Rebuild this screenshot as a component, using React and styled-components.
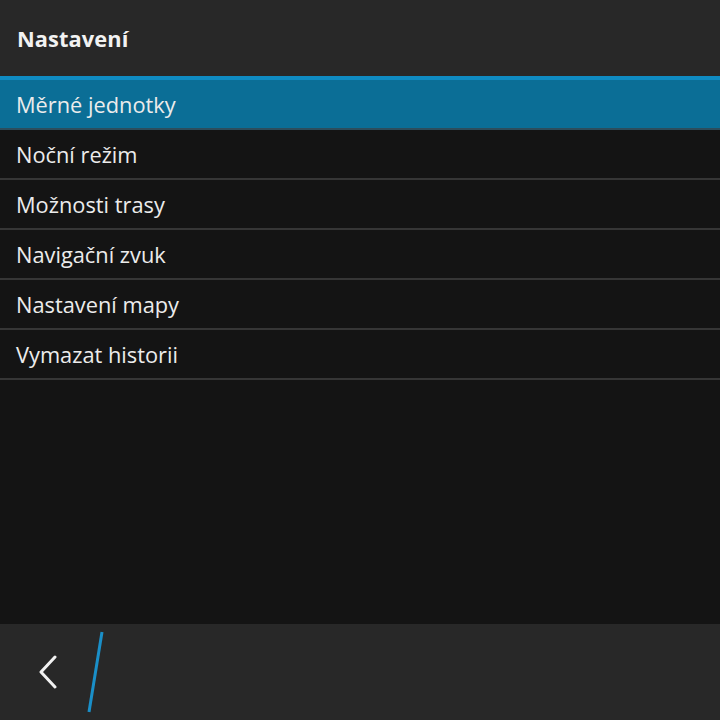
import React from 'react';
import styled, { createGlobalStyle } from 'styled-components';

const GlobalStyle = createGlobalStyle`
    html, body {
        margin: 0;
        padding: 0;
        background: #141414;
    }
    body {
        font-family: "Open Sans", "Noto Sans", sans-serif;
    }
`;

const StyledScreen = styled.div`
    width: 720px;
    height: 720px;
    display: flex;
    flex-direction: column;
    background: #141414;
    overflow: hidden;
`;

const StyledHeader = styled.header`
    height: 76px;
    flex: none;
    display: flex;
    align-items: center;
    padding: 0 16px 0 17px;
    box-sizing: border-box;
    background: #282828;
    color: #f2f2f2;
    font-size: 21.8px;
    font-weight: 700;
    letter-spacing: 0.1px;
`;

const StyledList = styled.ul`
    list-style: none;
    margin: 0;
    padding: 0;
    flex: 1;
`;

const StyledItem = styled.li`
    height: 48px;
    display: flex;
    align-items: center;
    padding: 0 16px;
    font-size: 21.8px;
    color: #ececec;
    background: ${(props) => (props.selected ? '#0b6e96' : 'transparent')};
    border-top: ${(props) => (props.selected ? '4px solid #0f8bc2' : 'none')};
    border-bottom: 2px solid ${(props) => (props.selected ? '#2c4d5c' : '#363636')};
`;

const StyledActionBar = styled.footer`
    height: 96px;
    flex: none;
    display: flex;
    align-items: center;
    background: #282828;
`;

const StyledBack = styled.button`
    width: 96px;
    height: 96px;
    border: none;
    background: none;
    padding: 0;
    display: flex;
    align-items: center;
    justify-content: center;
    cursor: pointer;
`;

const StyledDivider = styled.svg`
    display: block;
    margin-left: -9px;
`;

const items = ['Měrné jednotky', 'Noční režim', 'Možnosti trasy', 'Navigační zvuk', 'Nastavení mapy', 'Vymazat historii'];

const App = () => (
    <StyledScreen>
        <GlobalStyle />
        <StyledHeader>Nastavení</StyledHeader>
        <StyledList>
            {items.map((item, i) => (
                <StyledItem key={item} selected={i === 0}>
                    {item}
                </StyledItem>
            ))}
        </StyledList>
        <StyledActionBar>
            <StyledBack aria-label="Zpět">
                <svg width="20" height="34" viewBox="0 0 20 34">
                    <polyline points="17,2 3,17 17,32" fill="none" stroke="#f2f2f2" strokeWidth="3" strokeLinecap="round" strokeLinejoin="round" />
                </svg>
            </StyledBack>
            <StyledDivider width="20" height="96" viewBox="0 0 20 96">
                <line x1="15" y1="8" x2="2" y2="88" stroke="#1a8fc8" strokeWidth="3" />
            </StyledDivider>
        </StyledActionBar>
    </StyledScreen>
);

export default App;
